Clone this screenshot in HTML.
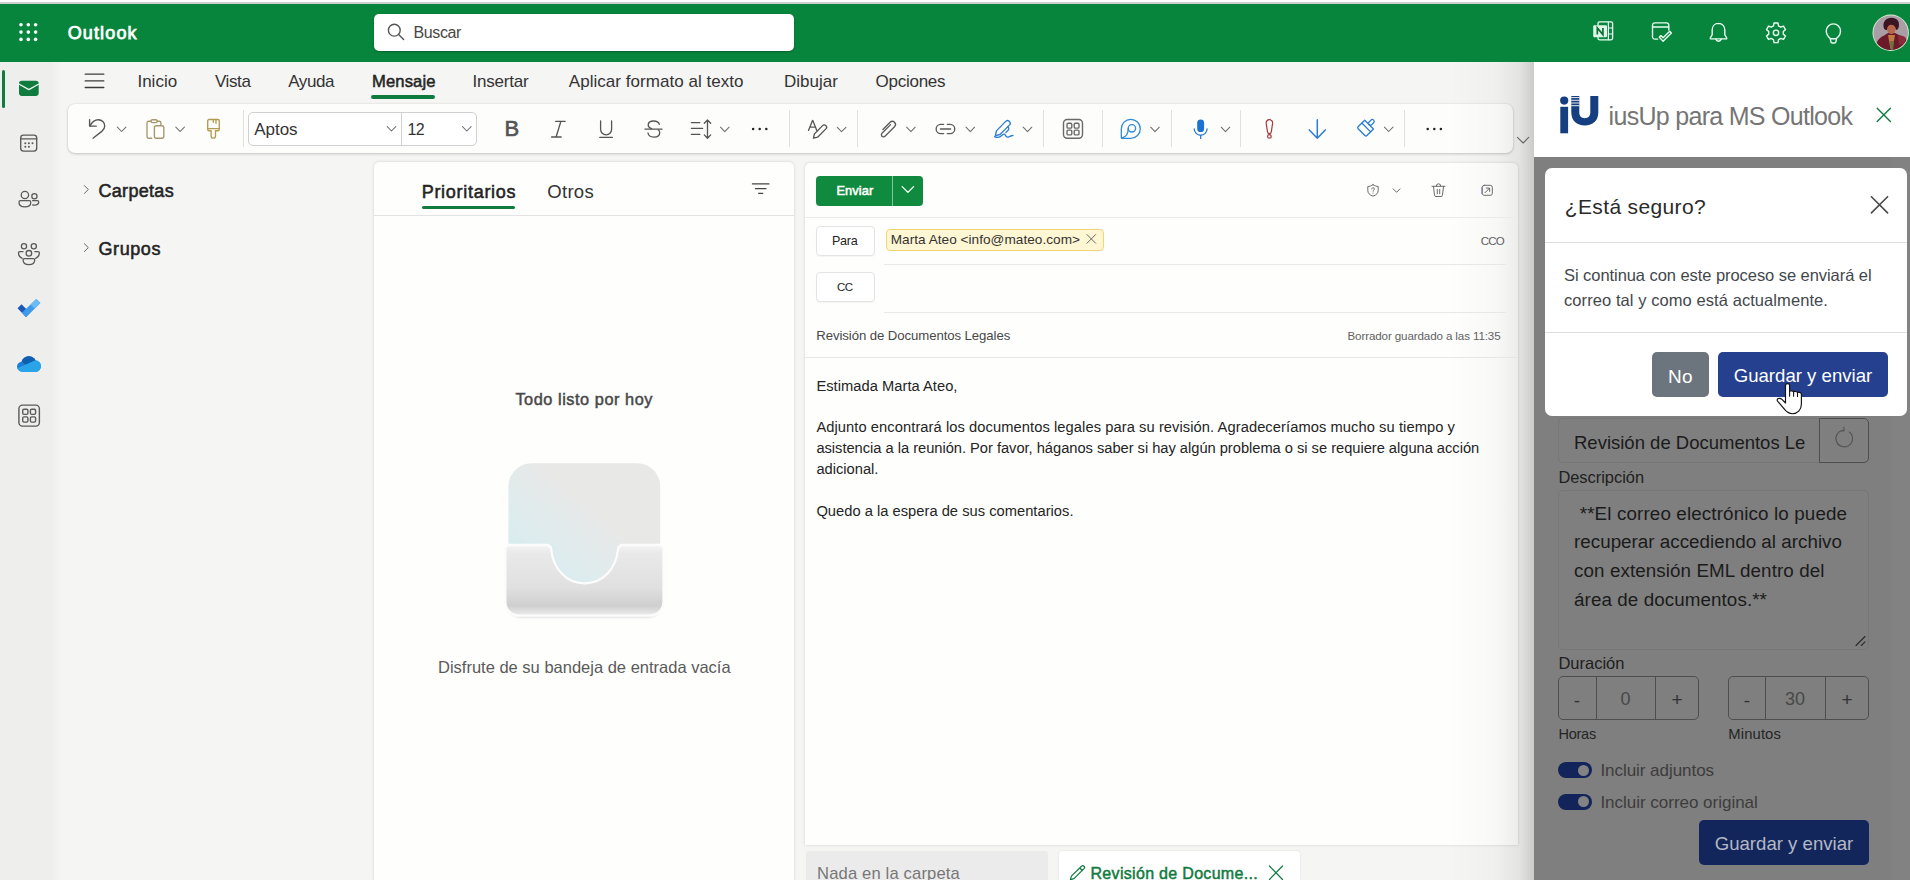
<!DOCTYPE html>
<html lang="es">
<head>
<meta charset="utf-8">
<title>Outlook</title>
<style>
*{box-sizing:border-box;margin:0;padding:0}
html,body{width:1910px;height:880px;overflow:hidden}
body{position:relative;background:#f5f5f3;font-family:"Liberation Sans",sans-serif;color:#242424;font-size:14px}
.abs{position:absolute}
.t{position:absolute;white-space:nowrap;line-height:1}
svg{position:absolute;overflow:visible}
/* top strips */
#strip1{left:0;top:0;width:1910px;height:2px;background:#fff}
#strip2{left:0;top:2px;width:1910px;height:2px;background:#cfcfcf}
#hdr{left:0;top:4px;width:1910px;height:58px;background:#07853c}
#search{left:374px;top:14px;width:420px;height:37px;background:#fff;border-radius:5px;box-shadow:0 1px 2px rgba(0,0,0,.25)}
/* rail */
#rail{left:0;top:62px;width:68px;height:818px;background:linear-gradient(90deg,#eeeeec 0,#eeeeec 50px,#f5f5f3 62px)}
#railsel{left:2px;top:70px;width:3px;height:38px;border-radius:2px;background:#0f7b3f}
/* ribbon */
#ribbon{left:68px;top:104px;width:1445px;height:49px;background:#fdfdfc;border-radius:7px;box-shadow:0 1px 3px rgba(0,0,0,.18),0 0 2px rgba(0,0,0,.10)}
.sep{position:absolute;top:110px;width:1px;height:37px;background:#e0e0e0}
.tab{font-size:17px;color:#333;top:72px}
/* panes */
#list{left:374px;top:162px;width:420px;height:718px;background:#fefefd;border-radius:5px 5px 0 0;box-shadow:0 0 3px rgba(0,0,0,.16)}
#compose{left:805px;top:162.5px;width:713px;height:682.5px;background:#fefefd;border-radius:5px 5px 0 0;box-shadow:0 0 3px rgba(0,0,0,.16)}
.hl{position:absolute;height:1px;background:#e8e8e8}
/* task pane */
#tp{left:1534px;top:62px;width:376px;height:818px;background:#fff}
#tpshadow{left:1450px;top:62px;width:84px;height:818px;background:linear-gradient(90deg,rgba(0,0,0,0) 0,rgba(0,0,0,.025) 55%,rgba(0,0,0,.07) 82%,rgba(0,0,0,.17) 100%)}
#ov{left:1534px;top:157px;width:376px;height:723px;background:#7f7f7f}
#modal{left:1545px;top:168px;width:362px;height:248px;background:#fff;border-radius:7px}
.btn{position:absolute;border-radius:5px;color:#fff;font-size:19px;text-align:center}
</style>
</head>
<body>
<div class="abs" id="strip1"></div>
<div class="abs" id="strip2"></div>
<div class="abs" id="hdr"></div>
<div class="abs" id="search"></div>
<div class="abs" id="rail"></div>
<div class="abs" id="railsel"></div>
<div class="abs" id="ribbon"></div>
<div class="abs" id="list"></div>
<div class="abs" id="compose"></div>
<div class="abs" id="tpshadow"></div>
<div class="abs" id="tp"></div>
<div class="abs" id="ov"></div>
<div class="abs" style="left:1891px;top:157px;width:19px;height:723px;background:#828282"></div>
<div class="abs" id="modal"></div>
<!--SHAPES-->
<!-- ribbon separators & font box -->
<div class="sep" style="left:243px"></div>
<div class="sep" style="left:789px"></div>
<div class="sep" style="left:857px"></div>
<div class="sep" style="left:1043px"></div>
<div class="sep" style="left:1102px"></div>
<div class="sep" style="left:1171px"></div>
<div class="sep" style="left:1240px"></div>
<div class="sep" style="left:1404px"></div>
<div class="abs" style="left:248px;top:112px;width:229px;height:34px;border:1px solid #d1d1d1;border-radius:5px;background:#fff"></div>
<div class="abs" style="left:401px;top:113px;width:1px;height:32px;background:#d1d1d1"></div>
<!-- Mensaje underline -->
<div class="abs" style="left:371px;top:95px;width:64px;height:4px;border-radius:2px;background:#0f7b3f"></div>
<!-- list header -->
<div class="abs" style="left:422px;top:206px;width:93px;height:3px;border-radius:1.5px;background:#0f7b3f"></div>
<div class="hl" style="left:374px;top:215px;width:420px;background:#e3e3e3"></div>
<!-- compose -->
<div class="abs" style="left:816px;top:175.5px;width:107px;height:30.5px;border-radius:4px;background:#0f8a3e"></div>
<div class="abs" style="left:892px;top:175.5px;width:1px;height:30.5px;background:#7fc79b"></div>
<div class="hl" style="left:805px;top:217px;width:713px;background:#ebebeb"></div>
<div class="abs" style="left:816px;top:225.5px;width:58.5px;height:30px;border:1px solid #e4e4e4;border-radius:4px;background:#fff;box-shadow:0 1px 1px rgba(0,0,0,.04)"></div>
<div class="abs" style="left:816px;top:272px;width:58.5px;height:30px;border:1px solid #e4e4e4;border-radius:4px;background:#fff;box-shadow:0 1px 1px rgba(0,0,0,.04)"></div>
<div class="abs" style="left:886px;top:228.5px;width:217.5px;height:22px;border:1px solid #f2d675;border-radius:4px;background:#fff6d3"></div>
<div class="hl" style="left:884px;top:264px;width:622px"></div>
<div class="hl" style="left:884px;top:312px;width:622px"></div>
<div class="hl" style="left:805px;top:357px;width:713px;background:#e6e6e6"></div>
<!-- bottom tabs -->
<div class="abs" style="left:805.5px;top:851px;width:242.5px;height:29px;background:#ebebeb;border-radius:3px 3px 0 0"></div>
<div class="abs" style="left:1058.5px;top:851px;width:241.5px;height:29px;background:#fff;border-radius:3px 3px 0 0;box-shadow:0 0 2px rgba(0,0,0,.12)"></div>
<!-- modal -->
<div class="hl" style="left:1545px;top:242px;width:362px;background:#dcdfe2"></div>
<div class="hl" style="left:1545px;top:332px;width:362px;background:#dcdfe2"></div>
<div class="abs" style="left:1652px;top:352px;width:57px;height:45px;border-radius:5px;background:#6c757d"></div>
<div class="abs" style="left:1718px;top:352px;width:170px;height:45px;border-radius:5px;background:#25408f"></div>
<!-- form under overlay -->
<div class="abs" style="left:1558px;top:418px;width:262px;height:45px;border:1px solid #767778;border-right:0;border-radius:5px 0 0 5px"></div>
<div class="abs" style="left:1819px;top:418px;width:50px;height:45px;border:1px solid #4e4e4e;border-radius:0 5px 5px 0"></div>
<div class="abs" style="left:1558px;top:490px;width:311px;height:159.5px;border:1px solid #767778;border-radius:5px"></div>
<div class="abs" style="left:1558px;top:675.5px;width:141px;height:44px;border:1px solid #4e4e4e;border-radius:5px"></div>
<div class="abs" style="left:1595.5px;top:675.5px;width:60.5px;height:44px;border:1px solid #4e4e4e;border-top:0;border-bottom:0"></div>
<div class="abs" style="left:1728px;top:675.5px;width:141px;height:44px;border:1px solid #4e4e4e;border-radius:5px"></div>
<div class="abs" style="left:1765px;top:675.5px;width:60.5px;height:44px;border:1px solid #4e4e4e;border-top:0;border-bottom:0"></div>
<div class="abs" style="left:1558px;top:762px;width:34px;height:16px;border-radius:8px;background:#13245a"></div>
<div class="abs" style="left:1577.5px;top:764.5px;width:11px;height:11px;border-radius:50%;background:#838383"></div>
<div class="abs" style="left:1558px;top:793.5px;width:34px;height:16px;border-radius:8px;background:#13245a"></div>
<div class="abs" style="left:1577.5px;top:796px;width:11px;height:11px;border-radius:50%;background:#838383"></div>
<div class="abs" style="left:1699px;top:820px;width:170px;height:45px;border-radius:5px;background:#13265c"></div>
<!--/SHAPES-->
<!--TEXT-->
<span class="t" style="left:67.7px;top:24.4px;font-size:18px;color:#fff;-webkit-text-stroke:0.75px #fff;letter-spacing:1.136px;">Outlook</span>
<span class="t" style="left:413.5px;top:25.1px;font-size:16px;color:#484644;letter-spacing:-0.383px;">Buscar</span>
<span class="t" style="left:137.4px;top:72.9px;font-size:17px;color:#333;letter-spacing:0.019px;">Inicio</span>
<span class="t" style="left:214.9px;top:72.9px;font-size:17px;color:#333;letter-spacing:-0.380px;">Vista</span>
<span class="t" style="left:288.2px;top:72.9px;font-size:17px;color:#333;letter-spacing:-0.381px;">Ayuda</span>
<span class="t" style="left:372.0px;top:73.6px;font-size:16.6px;color:#242424;-webkit-text-stroke:0.50px #242424;letter-spacing:0.124px;">Mensaje</span>
<span class="t" style="left:472.5px;top:72.9px;font-size:17px;color:#333;letter-spacing:-0.193px;">Insertar</span>
<span class="t" style="left:568.8px;top:72.9px;font-size:17px;color:#333;letter-spacing:0.035px;">Aplicar formato al texto</span>
<span class="t" style="left:784.0px;top:72.9px;font-size:17px;color:#333;letter-spacing:0.020px;">Dibujar</span>
<span class="t" style="left:875.5px;top:72.9px;font-size:17px;color:#333;letter-spacing:-0.254px;">Opciones</span>
<span class="t" style="left:504.4px;top:118.4px;font-size:22px;color:#555;-webkit-text-stroke:0.66px #555;">B</span>
<span class="t" style="left:254.3px;top:120.7px;font-size:17px;color:#333;letter-spacing:-0.057px;">Aptos</span>
<span class="t" style="left:407.5px;top:121.8px;font-size:16px;color:#333;letter-spacing:-0.648px;">12</span>
<span class="t" style="left:98.5px;top:181.7px;font-size:18px;color:#242424;-webkit-text-stroke:0.54px #242424;letter-spacing:0.307px;">Carpetas</span>
<span class="t" style="left:98.5px;top:239.7px;font-size:18px;color:#242424;-webkit-text-stroke:0.54px #242424;letter-spacing:0.578px;">Grupos</span>
<span class="t" style="left:421.7px;top:182.7px;font-size:18px;color:#242424;-webkit-text-stroke:0.54px #242424;letter-spacing:0.714px;">Prioritarios</span>
<span class="t" style="left:547.3px;top:182.5px;font-size:18.5px;color:#333;letter-spacing:0.293px;">Otros</span>
<span class="t" style="left:515.4px;top:391.0px;font-size:16.3px;color:#484848;-webkit-text-stroke:0.49px #484848;letter-spacing:0.554px;">Todo listo por hoy</span>
<span class="t" style="left:438.0px;top:658.9px;font-size:16.5px;color:#5a5a5a;">Disfrute de su bandeja de entrada vacía</span>
<span class="t" style="left:836.4px;top:185.3px;font-size:12.8px;color:#fff;-webkit-text-stroke:0.55px #fff;letter-spacing:0.120px;">Enviar</span>
<span class="t" style="left:832.0px;top:235.2px;font-size:12.6px;color:#242424;letter-spacing:-0.277px;">Para</span>
<span class="t" style="left:837.0px;top:282.0px;font-size:11.5px;color:#242424;letter-spacing:-0.663px;">CC</span>
<span class="t" style="left:1480.8px;top:236.1px;font-size:11.5px;color:#606060;letter-spacing:-0.854px;">CCO</span>
<span class="t" style="left:890.7px;top:233.1px;font-size:13.6px;color:#333;letter-spacing:0.035px;">Marta Ateo &lt;info@mateo.com&gt;</span>
<span class="t" style="left:816.3px;top:329.3px;font-size:13.2px;color:#484848;letter-spacing:-0.086px;">Revisión de Documentos Legales</span>
<span class="t" style="left:1347.5px;top:330.0px;font-size:11.6px;color:#626262;letter-spacing:-0.118px;">Borrador guardado a las 11:35</span>
<span class="t" style="left:816.4px;top:378.6px;font-size:14.7px;color:#242424;letter-spacing:0.034px;">Estimada Marta Ateo,</span>
<span class="t" style="left:816.4px;top:420.1px;font-size:14.7px;color:#242424;letter-spacing:0.073px;">Adjunto encontrará los documentos legales para su revisión. Agradeceríamos mucho su tiempo y</span>
<span class="t" style="left:816.4px;top:441.1px;font-size:14.7px;color:#242424;letter-spacing:-0.026px;">asistencia a la reunión. Por favor, háganos saber si hay algún problema o si se requiere alguna acción</span>
<span class="t" style="left:816.4px;top:462.0px;font-size:14.7px;color:#242424;">adicional.</span>
<span class="t" style="left:816.4px;top:503.8px;font-size:14.7px;color:#242424;letter-spacing:0.020px;">Quedo a la espera de sus comentarios.</span>
<span class="t" style="left:817.0px;top:865.6px;font-size:16.6px;color:#777;letter-spacing:0.154px;">Nada en la carpeta</span>
<span class="t" style="left:1090.5px;top:865.9px;font-size:16px;color:#0f7b3f;-webkit-text-stroke:0.48px #0f7b3f;letter-spacing:0.311px;">Revisión de Docume...</span>
<span class="t" style="left:1608.6px;top:104.2px;font-size:25px;color:#757575;letter-spacing:-0.703px;">iusUp para MS Outlook</span>
<span class="t" style="left:1564.8px;top:196.2px;font-size:21px;color:#2a2a2a;letter-spacing:0.356px;">¿Está seguro?</span>
<span class="t" style="left:1564.0px;top:267.4px;font-size:16.5px;color:#43474b;letter-spacing:-0.060px;">Si continua con este proceso se enviará el</span>
<span class="t" style="left:1564.0px;top:292.4px;font-size:16.5px;color:#43474b;letter-spacing:0.075px;">correo tal y como está actualmente.</span>
<span class="t" style="left:1668.0px;top:366.7px;font-size:19px;color:#fff;letter-spacing:0.352px;">No</span>
<span class="t" style="left:1733.7px;top:366.9px;font-size:18.6px;color:#fff;letter-spacing:0.007px;">Guardar y enviar</span>
<span class="t" style="left:1574.0px;top:433.7px;font-size:18.5px;color:#1b1b1b;">Revisión de Documentos Le</span>
<span class="t" style="left:1558.4px;top:469.3px;font-size:16.4px;color:#202020;">Descripción</span>
<span class="t" style="left:1579.7px;top:504.5px;font-size:18.8px;color:#1b1b1b;letter-spacing:0.138px;">**El correo electrónico lo puede</span>
<span class="t" style="left:1574.0px;top:533.4px;font-size:18.8px;color:#1b1b1b;letter-spacing:0.023px;">recuperar accediendo al archivo</span>
<span class="t" style="left:1574.0px;top:562.0px;font-size:18.8px;color:#1b1b1b;letter-spacing:0.097px;">con extensión EML dentro del</span>
<span class="t" style="left:1574.0px;top:590.8px;font-size:18.8px;color:#1b1b1b;letter-spacing:0.092px;">área de documentos.**</span>
<span class="t" style="left:1558.4px;top:655.1px;font-size:16.5px;color:#202020;letter-spacing:0.007px;">Duración</span>
<span class="t" style="left:1558.4px;top:726.9px;font-size:14.5px;color:#252525;letter-spacing:-0.218px;">Horas</span>
<span class="t" style="left:1728.3px;top:726.8px;font-size:14.8px;color:#252525;letter-spacing:0.127px;">Minutos</span>
<span class="t" style="left:1573.8px;top:690.7px;font-size:19px;color:#333;">-</span>
<span class="t" style="left:1620.5px;top:690.2px;font-size:18px;color:#484848;">0</span>
<span class="t" style="left:1671.4px;top:689.7px;font-size:19px;color:#333;">+</span>
<span class="t" style="left:1743.8px;top:690.7px;font-size:19px;color:#333;">-</span>
<span class="t" style="left:1785.0px;top:690.2px;font-size:18px;color:#484848;">30</span>
<span class="t" style="left:1841.4px;top:689.7px;font-size:19px;color:#333;">+</span>
<span class="t" style="left:1600.4px;top:761.7px;font-size:17px;color:#3c3c3c;letter-spacing:-0.046px;">Incluir adjuntos</span>
<span class="t" style="left:1600.4px;top:794.0px;font-size:17px;color:#3c3c3c;letter-spacing:-0.017px;">Incluir correo original</span>
<span class="t" style="left:1714.7px;top:834.9px;font-size:18.6px;color:#b4b8c4;letter-spacing:0.007px;">Guardar y enviar</span>
<!--/TEXT-->
<!--ICONS-->
<svg width="1910" height="880" viewBox="0 0 1910 880" style="left:0;top:0" fill="none" stroke-linecap="round" stroke-linejoin="round">
<!-- waffle -->
<g fill="#fff">
<circle cx="21" cy="24.8" r="1.8"/><circle cx="28.3" cy="24.8" r="1.8"/><circle cx="35.6" cy="24.8" r="1.8"/>
<circle cx="21" cy="32.1" r="1.8"/><circle cx="28.3" cy="32.1" r="1.8"/><circle cx="35.6" cy="32.1" r="1.8"/>
<circle cx="21" cy="39.4" r="1.8"/><circle cx="28.3" cy="39.4" r="1.8"/><circle cx="35.6" cy="39.4" r="1.8"/>
</g>
<!-- search -->
<g stroke="#555" stroke-width="1.4"><circle cx="394.3" cy="30.2" r="5.9"/><path d="M398.6 34.6L403.6 39.6"/></g>
<!-- onenote -->
<path d="M1608.4 22.3v17.400M1608.400 28h4.200M1608.400 34h4.200" stroke="#eafff2" stroke-width="1.200"/>
<g transform="translate(1000 0)"><g stroke="#eafff2" stroke-width="1.3">
<path d="M598 25V23.3a1.5 1.5 0 0 1 1.5-1.5h11.6a1.5 1.5 0 0 1 1.5 1.5v15a1.5 1.5 0 0 1-1.5 1.5h-11.6a1.5 1.5 0 0 1-1.5-1.5V37.4"/></g>
<rect x="593.2" y="25.2" width="13.8" height="12" rx="1.2" fill="#dff5e8"/>
<path d="M597.3 34.6V27.9L602.9 34.6V27.9" stroke="#0b6e34" stroke-width="1.7" stroke-linejoin="miter" stroke-linecap="butt"/>
</g>
<!-- calendar check -->
<g stroke="#eafff2" stroke-width="1.35">
<path d="M1668.8 30V25.2a2.4 2.4 0 0 0-2.4-2.4h-11.5a2.4 2.4 0 0 0-2.4 2.4v11.5a2.4 2.4 0 0 0 2.4 2.4h2.8"/>
<path d="M1652.6 27h16"/>
<path d="M1659.3 37.2l1.6-1.6 2.2 2.2 6.6-6.6 1.7 1.7-8.3 8.3z"/>
</g>
<!-- bell -->
<g stroke="#eafff2" stroke-width="1.4">
<path d="M1718.5 23.4c-4 0-6.3 3-6.3 6.6v4.6l-1.9 3.4a.6.6 0 0 0 .5.9h15.4a.6.6 0 0 0 .5-.9l-1.9-3.4V30c0-3.600-2.300-6.600-6.300-6.600z"/>
<path d="M1715.900 39.300a2.700 2.700 0 0 0 5.200 0"/>
</g>
<!-- gear -->
<g stroke="#eafff2" stroke-width="1.4">
<circle cx="1776" cy="32.800" r="2.700"/>
<path d="M1773.53 25.82 L1774.01 23.00 L1777.99 23.00 L1778.47 25.82 L1780.81 27.17 L1783.49 26.18 L1785.48 29.62 L1783.28 31.45 L1783.28 34.15 L1785.48 35.98 L1783.49 39.42 L1780.81 38.43 L1778.47 39.78 L1777.99 42.60 L1774.01 42.60 L1773.53 39.78 L1771.19 38.43 L1768.51 39.42 L1766.52 35.98 L1768.72 34.15 L1768.72 31.45 L1766.52 29.62 L1768.51 26.18 L1771.19 27.17Z" stroke-linejoin="round"/>
</g>
<!-- bulb -->
<g stroke="#eafff2" stroke-width="1.4">
<path d="M1830.200 38.300c-2.400-1.700-3.900-4.300-3.900-7.300a7.100 7.100 0 0 1 14.200 0c0 3-1.500 5.600-3.900 7.300l-.7 3.500a1.500 1.500 0 0 1-1.500 1.200h-2a1.500 1.500 0 0 1-1.500-1.200z"/>
<path d="M1830.300 38.700h6.200"/>
</g>
<!-- avatar -->
<defs><clipPath id="avc"><circle cx="1890.700" cy="32.800" r="17.300"/></clipPath></defs>
<circle cx="1890.700" cy="32.800" r="18.200" fill="#d8ecd0"/>
<g clip-path="url(#avc)" stroke="none">
<rect x="1872" y="14" width="38" height="38" fill="#a99ea6"/>
<path d="M1874 52c1-8 4-14 10-16.500l4-2.500h7l5 2.500c4 1 8 5 9 9v7.500z" fill="#6b1a2a"/>
<path d="M1898 36c3-1 6 0 8 2l-2 6-5 1z" fill="#8a2a3a"/>
<ellipse cx="1891.300" cy="28.500" rx="4.300" ry="5.600" fill="#b8674c"/>
<path d="M1883.700 27.500c-1.200-5.500 2.300-9.700 7.800-9.700 5.400 0 8.400 3.700 7.300 9-.5 2.200-1.700 3.300-2.800 3.300-.400-3.300-2-5.300-4.900-5.300-2.500 0-4.100 2-4.100 5.300-1.600 0-2.900-.800-3.300-2.600z" fill="#3b1622"/>
<path d="M1888 35l2.500 14h2l2.500-14z" fill="#c27a45"/>
<path d="M1890 41l1 11h2l1-11z" fill="#6b7040"/>
</g>
<!-- RAIL -->
<!-- mail -->
<rect x="19" y="80.800" width="19.700" height="15.100" rx="2.800" fill="#0f7b3f"/>
<path d="M19.300 84.200L28.850 89.600L38.400 84.200" stroke="#eafff2" stroke-width="1.300"/>
<!-- calendar -->
<g stroke="#5a5a5a" stroke-width="1.350">
<rect x="20.700" y="135.100" width="16" height="16" rx="2.800"/>
<path d="M20.700 138.900h16"/>
</g>
<g fill="#5a5a5a"><circle cx="25.300" cy="143.200" r="1"/><circle cx="28.900" cy="143.200" r="1"/><circle cx="32.500" cy="143.200" r="1"/><circle cx="25.300" cy="146.800" r="1"/><circle cx="28.900" cy="146.800" r="1"/></g>
<!-- people -->
<g stroke="#5a5a5a" stroke-width="1.300">
<circle cx="24.900" cy="195" r="3.700"/>
<path d="M20.500 200.700h8.800a1.500 1.500 0 0 1 1.500 1.500c0 2.900-2.400 4.600-5.900 4.600s-5.900-1.700-5.900-4.600a1.500 1.500 0 0 1 1.500-1.500z"/>
<circle cx="34.400" cy="196.200" r="2.600"/>
<path d="M32.600 200.700h4.700a1.400 1.400 0 0 1 1.400 1.400c0 1.900-1.600 3.100-4.200 3.100-.7 0-1.300-.1-1.800-.2"/>
</g>
<!-- groups -->
<g stroke="#5a5a5a" stroke-width="1.300">
<circle cx="24" cy="246.300" r="2.600"/><circle cx="33.800" cy="246.300" r="2.600"/><circle cx="28.900" cy="253.300" r="2.800"/>
<path d="M23 251.600h-3.300a1.200 1.200 0 0 0-1.200 1.200c0 2.600 1.500 4.700 3.700 5.500"/>
<path d="M34.800 251.600h3.300a1.200 1.200 0 0 1 1.200 1.200c0 2.600-1.500 4.700-3.700 5.500"/>
<path d="M24.400 258.700h9a1.300 1.300 0 0 1 1.300 1.300c0 2.900-2.400 4.700-5.800 4.700s-5.800-1.800-5.800-4.700a1.300 1.300 0 0 1 1.300-1.300z"/>
</g>
<!-- todo -->
<path d="M17.500 308.300l4-4 8.500 8.500-4 4.300z" fill="#1f57b8"/>
<path d="M21.900 312.800L36.300 298.900l4.100 4.100L26 317.200z" fill="#3f9bea"/>
<path d="M30.500 304.500L36.300 298.900l4.100 4.100-5.800 5.600z" fill="#6cbcf3"/>
<!-- onedrive -->
<path d="M23.500 372c-3.600 0-6.500-2.300-6.500-5.400 0-2.600 2-4.700 4.700-5.200.9-3 3.800-5.200 7.200-5.200 3 0 5.600 1.700 6.800 4.200 3 .3 5.300 2.700 5.300 5.700 0 3.300-2.600 5.900-6 5.900z" fill="#1a7fd4"/>
<path d="M21.700 361.400c.9-3 3.800-5.200 7.200-5.200 3 0 5.600 1.700 6.800 4.200l-9 5.400z" fill="#0f5fb0"/>
<path d="M17.300 368.300l18-8c3.200.3 5.700 2.700 5.700 5.800 0 3.300-2.600 5.900-6 5.900H23.500c-2.900 0-5.400-1.500-6.200-3.700z" fill="#2aa6ea" opacity=".95"/>
<!-- apps rail -->
<g stroke="#5a5a5a" stroke-width="1.400">
<rect x="18.900" y="405.100" width="20.500" height="21" rx="3.600"/>
<rect x="22.700" y="409.200" width="5.200" height="5.200" rx="1.300"/><rect x="30.400" y="409.200" width="5.200" height="5.200" rx="1.300"/>
<rect x="22.700" y="416.900" width="5.200" height="5.200" rx="1.300"/><rect x="30.400" y="416.900" width="5.200" height="5.200" rx="1.300"/>
</g>
</svg>

<svg width="1910" height="880" viewBox="0 0 1910 880" style="left:0;top:0" fill="none" stroke-linecap="round" stroke-linejoin="round">
<defs>
<path id="chv" d="M-4.300 -2.200L0 2.200L4.300 -2.200"/>
</defs>
<!-- hamburger -->
<path d="M85.200 74.200h18.600M85.200 80.900h18.600M85.200 87.500h18.600" stroke="#3c3c3c" stroke-width="1.300"/>
<!-- folder chevrons -->
<path d="M84.400 185.600l3.900 3.900-3.900 3.900" stroke="#666" stroke-width="1"/>
<path d="M84.400 243.700l3.900 3.900-3.900 3.900" stroke="#666" stroke-width="1"/>
<!-- ribbon chevrons -->
<g stroke="#6e6e6e" stroke-width="1.050">
<use href="#chv" x="121.600" y="129.300"/><use href="#chv" x="180.100" y="129.300"/>
<use href="#chv" x="391.500" y="128.800"/><use href="#chv" x="466.800" y="128.800"/>
<use href="#chv" x="724.800" y="129.400"/><use href="#chv" x="841.600" y="129.500"/>
<use href="#chv" x="910.900" y="129.400"/><use href="#chv" x="970.300" y="129.400"/><use href="#chv" x="1027.500" y="129.400"/>
<use href="#chv" x="1155" y="129.400"/><use href="#chv" x="1225.500" y="129.400"/><use href="#chv" x="1388.700" y="129.300"/>
</g>
<path d="M1517.500 137.400l5.600 5.600 5.600-5.600" stroke="#666" stroke-width="1.100"/>
<!-- undo -->
<g stroke="#555" stroke-width="1.350">
<path d="M89.600 119.600v6.500h6.700"/>
<path d="M90 126c1.800-3.800 4.700-6.300 8.400-6.300 3.600 0 6.300 2.700 6.300 6.200 0 2.300-1 3.800-2.600 5.200L93 138.200"/>
</g>
<!-- paste -->
<g stroke="#a8976c" stroke-width="1.350">
<path d="M151 121.200h-2.300a1.700 1.700 0 0 0-1.700 1.700v13.600a1.700 1.700 0 0 0 1.700 1.700h3"/>
<path d="M157.200 121.200h2a1.700 1.700 0 0 1 1.700 1.700v2.400"/>
<rect x="151" y="119.700" width="6.200" height="2.900" rx="1.400"/>
<rect x="154.400" y="125.700" width="9.400" height="12.500" rx="1.900"/>
</g>
<!-- format painter -->
<g stroke="#b19c52" stroke-width="1.350">
<path d="M207.700 120.800a1.300 1.300 0 0 1 1.300-1.300h9a1.300 1.300 0 0 1 1.300 1.300v8.400a1.500 1.500 0 0 1-1.500 1.500h-2.300v5.200a2.200 2.200 0 0 1-4.400 0v-5.200h-1.900a1.500 1.500 0 0 1-1.500-1.500z"/>
<path d="M207.700 128.600h11.600"/>
<path d="M213.300 119.700v2.600M216 119.700v3.600"/>
</g>
<!-- B I U S -->
<g stroke="#555" stroke-width="1.300">
<path d="M555.600 121.300h9.600M551.600 137h9.600M560.900 121.300l-4.800 15.700"/>
<path d="M600.600 121v8.300a5.500 5.500 0 0 0 11 0V121M599.800 137.400h12.600"/>
<path d="M645 129.200h17"/>
<path d="M659.300 124.300c-.6-2-2.700-3.300-5.600-3.300-3.300 0-5.500 1.600-5.500 4 0 1.700 1.100 2.900 3.300 3.700M648 133c.4 2.500 2.600 4.100 5.900 4.100 3.500 0 5.800-1.700 5.800-4.300 0-1.300-.5-2.300-1.500-3"/>
</g>
<!-- line spacing -->
<g stroke="#555" stroke-width="1.300">
<path d="M691.400 122.600h8.400M691.400 128.400h11.200M691.400 134.400h8.400"/>
<path d="M707.500 120.200v17.800M704.300 123.300l3.200-3.300 3.200 3.300M704.300 134.900l3.200 3.300 3.200-3.300"/>
</g>
<!-- more dots -->
<g fill="#222"><circle cx="753.100" cy="129" r="1.250"/><circle cx="759.700" cy="129" r="1.250"/><circle cx="766.300" cy="129" r="1.250"/>
<circle cx="1427.700" cy="129" r="1.250"/><circle cx="1434.300" cy="129" r="1.250"/><circle cx="1440.900" cy="129" r="1.250"/></g>
<!-- A pen -->
<g stroke="#555" stroke-width="1.300">
<path d="M808.500 130.400l4-10h.3l4 10M809.800 127.200h5.700"/>
<path d="M822.600 125.600a2.300 2.300 0 0 1 3.300 3.300l-8.300 8.300-4.200 1 1-4.200z"/>
</g>
<!-- paperclip -->
<path d="M882.600 128.800l7.200-7.200a3.100 3.100 0 0 1 4.400 4.400l-9.500 9.500a2.100 2.100 0 0 1-3-3l8.600-8.600" stroke="#5a5a5a" stroke-width="1.300" transform="translate(0.300 0.700) scale(1)"/>
<!-- link -->
<g stroke="#5a5a5a" stroke-width="1.350">
<path d="M943.600 124.300h-2.800a4.650 4.650 0 0 0 0 9.300h2.800M947.300 124.300h2.800a4.650 4.650 0 0 1 0 9.300h-2.800M940.400 128.950h10.200"/>
</g>
<!-- signature -->
<g stroke="#2b7cd3" stroke-width="1.300">
<path d="M1005.700 121.400a2.600 2.600 0 0 1 3.700 3.700l-9.400 9.400-4.600 1.100 1-4.700z"/>
<path d="M1007.600 126.900c1.600.6 1.600 2.300.5 3.400l-2.300 2.300"/>
<path d="M994.600 136.600c2.500 1.300 5.600.7 7.400-1.300 1.200-1.400 2.700-1.600 3.300-.3.500 1.200 1.200 2.300 2.800 2.100 1.700-.2 2.500-1.600 4.800-1.600"/>
</g>
<!-- apps -->
<g stroke="#6a6a66" stroke-width="1.400">
<rect x="1063.500" y="119.500" width="19" height="18.800" rx="3.700"/>
<rect x="1067" y="123.300" width="4.800" height="4.800" rx="1.200"/><rect x="1074.200" y="123.300" width="4.800" height="4.800" rx="1.200"/>
<rect x="1067" y="130.100" width="4.800" height="4.800" rx="1.200"/><rect x="1074.200" y="130.100" width="4.800" height="4.800" rx="1.200"/>
</g>
<!-- loop -->
<g stroke="#2e8bd6" stroke-width="1.300">
<path d="M1121.300 137.900v-9a9.500 9.500 0 1 1 9.500 9.400h-9.100z"/>
<circle cx="1131.900" cy="128.300" r="3.700"/>
<path d="M1128.200 128.600c0 5-2.200 8.700-6.300 9.400"/>
</g>
<!-- mic -->
<rect x="1197.200" y="119.400" width="6.900" height="12.700" rx="3.450" fill="#1a73d0"/>
<path d="M1194.200 128.800a6.450 6.450 0 0 0 12.900 0M1200.650 135.400v3" stroke="#2b7cd3" stroke-width="1.300"/>
<!-- importance high -->
<g stroke="#a4373a" stroke-width="1.200">
<path d="M1269.400 119.700c2.100 0 3.400 1.600 3.200 3.700l-1.300 8.500c-.2 1.200-.9 1.800-1.900 1.800s-1.700-.6-1.900-1.800l-1.300-8.500c-.2-2.100 1.100-3.700 3.200-3.700z"/>
<circle cx="1269.400" cy="136.400" r="1.800"/>
</g>
<!-- arrow down -->
<path d="M1317.300 119.800v18.400M1309.300 129.900l8 8.400 8-8.400" stroke="#2b7cd3" stroke-width="1.500"/>
<!-- brush tilted -->
<g stroke="#2b7cd3" stroke-width="1.300" transform="translate(1365.400 128.300) rotate(45)">
<rect x="-1.900" y="-11.600" width="3.800" height="6.400" rx="1.900"/>
<path d="M-6.200 -5.200h12.400v9.300a1.400 1.400 0 0 1-1.400 1.400h-9.600a1.400 1.400 0 0 1-1.400-1.400z"/>
<path d="M-6.200 -1.200h12.400"/>
</g>
<!-- filter icon -->
<path d="M752.400 183.900h16.600M755.400 188.600h10.600M758.600 193.300h4.200" stroke="#444" stroke-width="1.200"/>
<!-- send chevron -->
<path d="M902.200 186.600l5.700 5.800 5.700-5.800" stroke="#fff" stroke-width="1.300"/>
<!-- chip x -->
<path d="M1087 234.600l8.600 8.600M1095.600 234.600l-8.600 8.600" stroke="#666" stroke-width="1"/>
<!-- compose header icons -->
<g stroke="#636363" stroke-width=".95">
<path d="M1373 184.700c1.700 1.200 3.500 1.700 5.200 1.800v4c0 2.600-1.700 4.500-5.200 5.700-3.500-1.200-5.200-3.100-5.200-5.700v-4c1.700-.1 3.500-.6 5.200-1.800z"/>
<path d="M1371.700 189c.1-.8.600-1.300 1.400-1.300.8 0 1.300.5 1.300 1.200 0 1.100-1.300 1.100-1.300 2.400M1373.100 193v.1" stroke-width=".9"/>
<path d="M1393.200 188.900l3.400 3.400 3.400-3.400"/>
<path d="M1432 186.300h13M1436.200 186.100a2.300 2.300 0 0 1 4.600 0M1433.500 186.500l1 8.700a1.500 1.500 0 0 0 1.500 1.300h5a1.500 1.500 0 0 0 1.500-1.300l1-8.700M1437.300 189.300v4.500M1439.700 189.300v4.500"/>
<path d="M1484.300 185.300h6a2 2 0 0 1 2 2v6a2 2 0 0 1-2 2h-6a2 2 0 0 1-2-2v-6a2 2 0 0 1 2-2zM1485 192.700l4.400-4.400M1486.300 188.100h3.300v3.300"/><path d="M1481.600 187.300v6.400" stroke="#9a9ac8" stroke-width="1"/>
</g>
<!-- bottom tab pencil + x -->
<g stroke="#0f7b3f" stroke-width="1.200">
<path d="M1081.500 866.300a1.700 1.700 0 0 1 2.500 2.400l-10 10-3.600 1 1-3.600zM1079.800 868l2.500 2.500"/>
<path d="M1269.500 866l13 13.500M1282.500 866l-13 13.500"/>
</g>
<!-- task pane close -->
<path d="M1877.200 108.300l13.200 13.200M1890.400 108.300l-13.200 13.200" stroke="#0f7b3f" stroke-width="1.400"/>
<!-- modal close -->
<path d="M1871.400 196.700l16.200 16.200M1887.600 196.700l-16.200 16.200" stroke="#4a4a4a" stroke-width="1.600"/>
<!-- iusUp logo -->
<g fill="#153f80" stroke="none">
<circle cx="1564.200" cy="100.600" r="4.100"/>
<rect x="1560.300" y="106.800" width="7.800" height="26.500"/>
<path d="M1571.300 96v16.500c0 8 5.500 13 13.500 13s13.500-5 13.500-13V96h-8v16.500c0 3.500-2 5.700-5.500 5.700s-5.500-2.200-5.500-5.700V96z"/>
</g>
<path d="M1571.600 97.600h7.400M1571.600 100.300h7.400M1571.600 103h7.400M1571.600 105.700h7.400" stroke="#fff" stroke-width=".9"/>
<!-- refresh icon in form -->
<path d="M1849.300 432a8.300 8.300 0 1 1-5.800-1.700M1843.800 427.300l.3 3.400-3.300.5" stroke="#555" stroke-width="1.100"/>
<!-- textarea resize grip -->
<path d="M1856 645.500l9-9M1861.300 645.500l3.700-3.700" stroke="#2a2a2a" stroke-width="1.100"/>
</svg>

<svg width="1910" height="880" viewBox="0 0 1910 880" style="left:0;top:0" fill="none" stroke-linecap="round" stroke-linejoin="round">
<defs>
<linearGradient id="bk" x1="0" y1="1" x2="0.75" y2="0.25"><stop offset="0" stop-color="#cfeaf1"/><stop offset=".45" stop-color="#dfecee"/><stop offset=".8" stop-color="#e8e8e7"/></linearGradient>
<linearGradient id="tr" x1="0" y1="0" x2="0" y2="1"><stop offset="0" stop-color="#f4f4f4"/><stop offset=".12" stop-color="#e9e9e9"/><stop offset=".6" stop-color="#e0e0e0"/><stop offset=".86" stop-color="#cfcfcf"/><stop offset=".95" stop-color="#e2e2e2"/><stop offset="1" stop-color="#f0f0f0"/></linearGradient>
<filter id="sh" x="-10%" y="-10%" width="120%" height="130%"><feGaussianBlur stdDeviation="1.2"/></filter>
</defs>
<!-- inbox illustration -->
<rect x="508.400" y="463.300" width="151.800" height="130" rx="23" fill="url(#bk)"/>
<path d="M507 548.500a4 4 0 0 1 4-4h35.500c3 0 4.600 1.500 5 4.500 1.800 19 14.500 33.500 33.100 33.500s31.300-14.500 33.100-33.500c.4-3 2-4.500 5-4.500H658a4 4 0 0 1 4 4v53.500a14 14 0 0 1-14 14H521a14 14 0 0 1-14-14z" fill="#bdbdbd" opacity=".55" filter="url(#sh)" transform="translate(0 1.500)"/>
<path d="M505.300 549a4 4 0 0 1 4-4h37c3 0 4.600 1.500 5 4.500 1.800 19 14.700 33.800 33.300 33.800s31.500-14.800 33.300-33.800c.4-3 2-4.500 5-4.500h36.600a4 4 0 0 1 4 4v52.700a14 14 0 0 1-14 14H519.300a14 14 0 0 1-14-14z" fill="url(#tr)" stroke="#fcfcfc" stroke-width="2.300"/>
<!-- hand cursor -->
<path d="M1785.500 403V385.600a2.050 2.050 0 0 1 4.100 0V391.800c0-1.300 4-1.300 4 .4 0-1.200 3.900-1 3.900.6.200-1 3.900-.6 3.900 1.200V404c0 6-4 9.700-9 9.700-3.500 0-5.600-1.600-7.600-4L1777.600 401.200c-1-1.300-.2-2.600 1.200-2.800 1.200-.2 2.400.3 3.400 1.200z" fill="#fff" stroke="#111" stroke-width="1.150"/>
<path d="M1789.600 391.800v4.400M1793.600 392.200v4M1797.500 392.800v3.600" stroke="#111" stroke-width="1.100"/>
</svg>

<!--/ICONS-->
</body>
</html>
